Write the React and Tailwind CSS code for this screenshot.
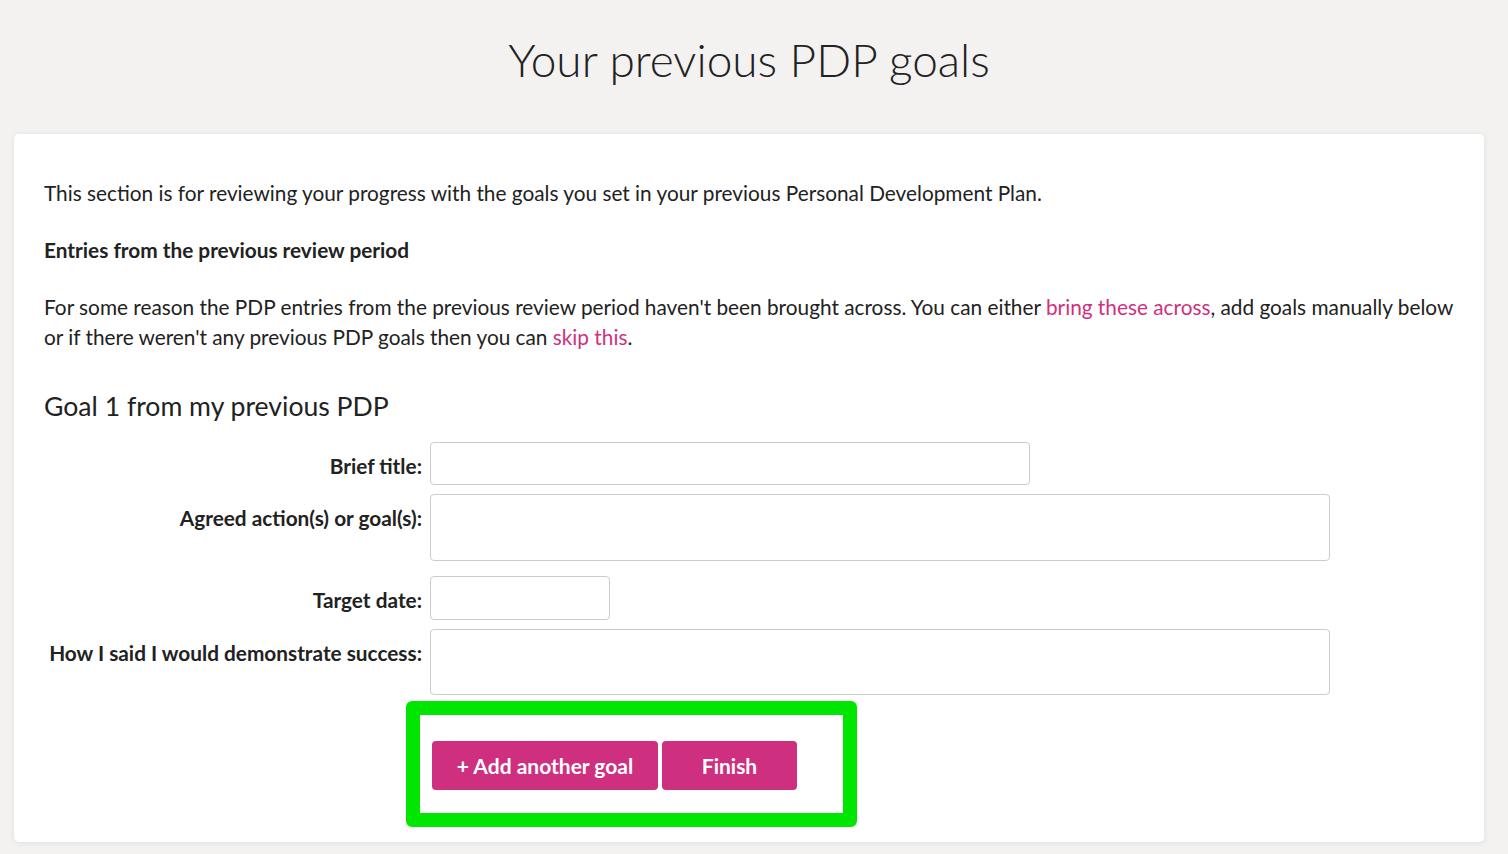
import React from 'react';

const rows = [
  { label: 'Brief title:', width: 'w-[600px]', height: 'h-[43px]', gap: 'mt-0' },
  { label: 'Agreed action(s) or goal(s):', width: 'w-[900px]', height: 'h-[67px]', gap: 'mt-[9px]', area: true },
  { label: 'Target date:', width: 'w-[180px]', height: 'h-[44px]', gap: 'mt-[15px]' },
  { label: 'How I said I would demonstrate success:', width: 'w-[900px]', height: 'h-[66px]', gap: 'mt-[9px]', area: true },
];

function FieldRow({ label, width, height, gap, area }) {
  const boxClass = `${width} ${height} rounded-[4px] border border-[#cccccc] bg-white outline-none`;
  return (
    <div className={`flex items-start ${gap}`}>
      <label className="w-[386px] shrink-0 pt-[9px] pr-[8px] text-right text-[20.8px] font-bold leading-[30px] text-[#222222]">
        {label}
      </label>
      {area ? <textarea className={`${boxClass} resize-none`} /> : <input type="text" className={boxClass} />}
    </div>
  );
}

export default function App() {
  return (
    <div className="min-h-screen bg-[#f3f2f1] pr-[10px] pb-[12px] font-['Lato',sans-serif] text-[#222222]">
      <h1 className="pt-[32px] text-center text-[46px] font-light leading-[1.2]">Your previous PDP goals</h1>

      <div className="mx-[14px] mt-[47px] rounded-[5px] bg-white px-[30px] pt-[44px] pb-[15px] shadow-[0_1px_6px_rgba(0,0,0,0.08)]">
        <p className="text-[20.8px] leading-[30px]">
          This section is for reviewing your progress with the goals you set in your previous Personal Development Plan.
        </p>
        <p className="mt-[27px] text-[20.8px] font-bold leading-[30px]">Entries from the previous review period</p>
        <p className="mt-[27px] text-[20.8px] leading-[30px]">
          For some reason the PDP entries from the previous review period haven't been brought across. You can either{' '}
          <a href="#" className="text-[#d0307f]">
            bring these across
          </a>
          , add goals manually below or if there weren't any previous PDP goals then you can{' '}
          <a href="#" className="text-[#d0307f]">
            skip this
          </a>
          .
        </p>

        <h2 className="mt-[38px] text-[26.6px] leading-[32px]">Goal 1 from my previous PDP</h2>

        <form className="mt-[20px]">
          {rows.map((row) => (
            <FieldRow key={row.label} {...row} />
          ))}

          {/* highlighted action area */}
          <div className="mt-[6px] ml-[362px] w-[451px] rounded-[6px] border-[14px] border-[#00e600] px-[12px] pt-[26px] pb-[23px]">
            <div className="flex gap-[4px]">
              <button
                type="button"
                className="h-[49px] w-[226px] rounded-[4px] bg-[#cf2f7f] text-[21px] font-bold text-white"
              >
                + Add another goal
              </button>
              <button
                type="button"
                className="h-[49px] w-[135px] rounded-[4px] bg-[#cf2f7f] text-[21px] font-bold text-white"
              >
                Finish
              </button>
            </div>
          </div>
        </form>
      </div>
    </div>
  );
}
